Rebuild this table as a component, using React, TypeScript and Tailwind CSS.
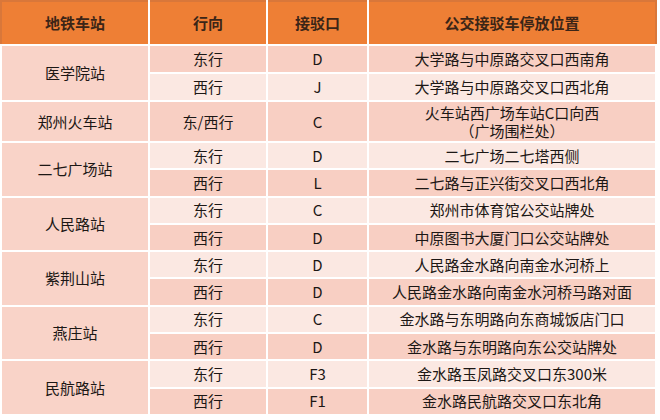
const rows = [
  { station: "医学院站", items: [
    { dir: "东行", gate: "D", place: ["大学路与中原路交叉口西南角"] },
    { dir: "西行", gate: "J", place: ["大学路与中原路交叉口西北角"] },
  ] },
  { station: "郑州火车站", items: [
    { dir: "东/西行", gate: "C", place: ["火车站西广场车站C口向西", "（广场围栏处）"] },
  ] },
  { station: "二七广场站", items: [
    { dir: "东行", gate: "D", place: ["二七广场二七塔西侧"] },
    { dir: "西行", gate: "L", place: ["二七路与正兴街交叉口西北角"] },
  ] },
  { station: "人民路站", items: [
    { dir: "东行", gate: "C", place: ["郑州市体育馆公交站牌处"] },
    { dir: "西行", gate: "D", place: ["中原图书大厦门口公交站牌处"] },
  ] },
  { station: "紫荆山站", items: [
    { dir: "东行", gate: "D", place: ["人民路金水路向南金水河桥上"] },
    { dir: "西行", gate: "D", place: ["人民路金水路向南金水河桥马路对面"] },
  ] },
  { station: "燕庄站", items: [
    { dir: "东行", gate: "C", place: ["金水路与东明路向东商城饭店门口"] },
    { dir: "西行", gate: "D", place: ["金水路与东明路向东公交站牌处"] },
  ] },
  { station: "民航路站", items: [
    { dir: "东行", gate: "F3", place: ["金水路玉凤路交叉口东300米"] },
    { dir: "西行", gate: "F1", place: ["金水路民航路交叉口东北角"] },
  ] },
];

export default function App() {
  let idx = 0;
  return (
    <div
      className="w-[660px] h-[420px] bg-white overflow-hidden text-[#1c1715]"
      style={{ fontFamily: '"Noto Sans CJK SC", "Noto Sans", sans-serif' }}
    >
      <table className="w-[657px] border-collapse text-[15px] leading-[18px] text-center">
        <colgroup>
          <col className="w-[148px]" />
          <col className="w-[118px]" />
          <col className="w-[101px]" />
          <col />
        </colgroup>
        <thead>
          <tr className="h-[44px] bg-[#ee7f35] text-[#3b2517]">
            <th className="border-2 border-white border-t-[#d9773a] border-l-[#d9773a] font-semibold">地铁车站</th>
            <th className="border-2 border-white border-t-[#d9773a] font-semibold">行向</th>
            <th className="border-2 border-white border-t-[#d9773a] font-semibold">接驳口</th>
            <th className="border-2 border-white border-t-[#d9773a] border-r-[#d9773a] font-semibold">公交接驳车停放位置</th>
          </tr>
        </thead>
        <tbody>
          {rows.map((g) =>
            g.items.map((it, j) => {
              const dark = idx % 2 === 0;
              const tall = it.place.length > 1;
              const h = idx < 2 ? "h-[28px]" : tall ? "h-[41px]" : "h-[27.3px]";
              idx++;
              const bg = dark ? "bg-[#f8cfc3]" : "bg-[#fbe8e2]";
              return (
                <tr key={g.station + j} className={h}>
                  {j === 0 && (
                    <td rowSpan={g.items.length} className="border-2 border-white bg-[#f9d3c8]">
                      {g.station}
                    </td>
                  )}
                  <td className={`border-2 border-white ${bg}`}>{it.dir}</td>
                  <td className={`border-2 border-white ${bg}`}>{it.gate}</td>
                  <td className={`border-2 border-white ${bg} ${tall ? "leading-[18px]" : ""}`}>
                    {it.place.map((p) => (
                      <div key={p}>{p}</div>
                    ))}
                  </td>
                </tr>
              );
            })
          )}
        </tbody>
      </table>
    </div>
  );
}
